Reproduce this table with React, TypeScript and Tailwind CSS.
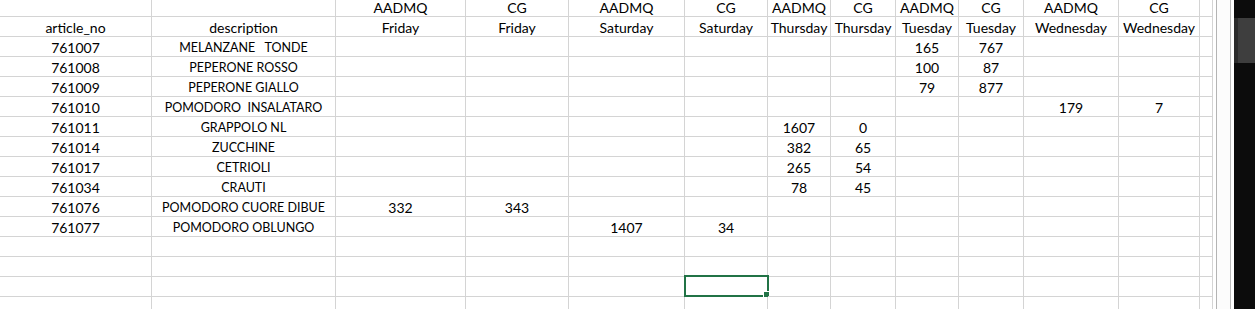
import React from "react";

const widths = [
  "w-[152px]",
  "w-[184px]",
  "w-[130px]",
  "w-[103px]",
  "w-[116px]",
  "w-[83px]",
  "w-[63px]",
  "w-[65px]",
  "w-[63px]",
  "w-[65px]",
  "w-[95px]",
  "w-[81px]",
  "w-[13px]",
];

type Row = string[];

const header1: Row = ["", "", "AADMQ", "CG", "AADMQ", "CG", "AADMQ", "CG", "AADMQ", "CG", "AADMQ", "CG", ""];
const header2: Row = [
  "article_no",
  "description",
  "Friday",
  "Friday",
  "Saturday",
  "Saturday",
  "Thursday",
  "Thursday",
  "Tuesday",
  "Tuesday",
  "Wednesday",
  "Wednesday",
  "",
];

function mk(no: string, desc: string, vals: Record<number, string>): Row {
  const r: Row = [no, desc, "", "", "", "", "", "", "", "", "", "", ""];
  Object.entries(vals).forEach(([k, v]) => {
    r[Number(k)] = v;
  });
  return r;
}

const data: Row[] = [
  mk("761007", "MELANZANE   TONDE", { 8: "165", 9: "767" }),
  mk("761008", "PEPERONE ROSSO", { 8: "100", 9: "87" }),
  mk("761009", "PEPERONE GIALLO", { 8: "79", 9: "877" }),
  mk("761010", "POMODORO  INSALATARO", { 10: "179", 11: "7" }),
  mk("761011", "GRAPPOLO NL", { 6: "1607", 7: "0" }),
  mk("761014", "ZUCCHINE", { 6: "382", 7: "65" }),
  mk("761017", "CETRIOLI", { 6: "265", 7: "54" }),
  mk("761034", "CRAUTI", { 6: "78", 7: "45" }),
  mk("761076", "POMODORO CUORE DIBUE", { 2: "332", 3: "343" }),
  mk("761077", "POMODORO OBLUNGO", { 4: "1407", 5: "34" }),
];

const empty: Row = Array(13).fill("");

const rows: Row[] = [header1, header2, ...data, empty, empty, empty, empty];

export default function App() {
  return (
    <div
      className="flex h-[309px] w-[1255px] overflow-hidden bg-white text-black"
      style={{ fontFamily: "Lato, 'Open Sans', sans-serif" }}
    >
      <div className="flex w-[1213px] shrink-0 flex-col">
        {rows.map((row, ri) => (
          <div key={ri} className={`flex shrink-0 ${ri === 0 ? "h-[17px]" : "h-[20px]"}`}>
            {row.map((cell, ci) => {
              const upper = ri >= 2 && ci === 1;
              return (
                <div
                  key={ci}
                  className={`${widths[ci]} relative flex shrink-0 items-end justify-center whitespace-pre border-r border-b border-[#d4d4d4] pb-[1px] leading-[15px] ${
                    upper ? "text-[12.5px]" : "text-[14px]"
                  }`}
                >
                  {cell}
                  {ri === 14 && ci === 5 && (
                    <div className="absolute left-[-1px] top-[-2px] h-[22px] w-[85px] border-2 border-[#217346]">
                      <div className="absolute left-[78px] top-[15px] h-[5px] w-[5px] bg-[#217346] outline outline-1 outline-white" />
                    </div>
                  )}
                </div>
              );
            })}
          </div>
        ))}
      </div>
      <div className="w-[3px] shrink-0 bg-white" />
      <div className="w-px shrink-0 bg-[#b4b4b4]" />
      <div className="w-[13px] shrink-0 bg-[#fcfcfc]" />
      <div className="w-px shrink-0 bg-[#bcbcbc]" />
      <div className="w-[3px] shrink-0 bg-white" />
      <div className="flex w-[21px] shrink-0 flex-col bg-[#0c0c0c]">
        <div className="mt-[18px] flex h-[45px]">
          <div className="w-[4px] bg-[#2c2c2c]" />
          <div className="flex-1 bg-[#3e3e3e]" />
        </div>
      </div>
    </div>
  );
}
